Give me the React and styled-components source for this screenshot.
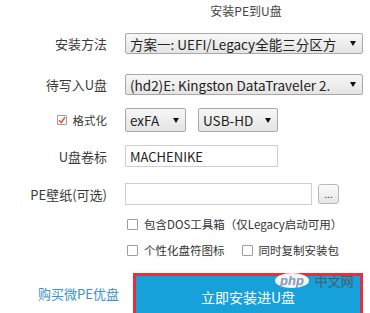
import React from "react";
import styled, { createGlobalStyle } from "styled-components";

const Global = createGlobalStyle`
  html, body { margin: 0; padding: 0; background: #fff; overflow: hidden; }
  body { font-family: "Noto Sans CJK SC", "Noto Sans", sans-serif; color: #333; }
`;

const Page = styled.div`
  width: 370px;
  height: 313px;
  overflow: hidden;
  position: relative;
  background: #fff;
`;

const Title = styled.div`
  height: 22px;
  line-height: 22px;
  padding-left: 122px;
  text-align: center;
  font-size: 12px;
  color: #444;
`;

const Row = styled.div`
  display: flex;
  align-items: center;
  height: ${(p) => p.$h}px;
  margin-top: ${(p) => p.$mt}px;
`;

const Label = styled.div`
  width: 107px;
  padding-right: 18px;
  display: flex;
  justify-content: flex-end;
  align-items: center;
  gap: 6px;
  font-size: ${(p) => p.$fs || 13}px;
  color: #3a3a3a;
  white-space: nowrap;
  flex-shrink: 0;
`;

const Select = styled.div`
  box-sizing: border-box;
  width: ${(p) => p.$w}px;
  height: ${(p) => p.$h}px;
  margin-right: ${(p) => p.$mr || 0}px;
  border: 1px solid #a8a8a8;
  border-radius: 2px;
  background: linear-gradient(#f7f7f7, #e4e4e4);
  display: flex;
  align-items: center;
  padding: 0 6px 0 4px;
  font-size: 13.5px;
  color: #222;
  white-space: nowrap;
  overflow: hidden;
`;

const SelectText = styled.span`
  flex: 1;
  overflow: hidden;
`;

const Arrow = styled.span`
  width: 0;
  height: 0;
  border-left: 3.5px solid transparent;
  border-right: 3.5px solid transparent;
  border-top: 5px solid #111;
  margin-left: 4px;
  flex-shrink: 0;
`;

const TextInput = styled.div`
  box-sizing: border-box;
  width: ${(p) => p.$w}px;
  height: 22px;
  border: 1px solid #cfcfcf;
  background: #fff;
  display: flex;
  align-items: center;
  padding-left: 4px;
  font-size: 13px;
  color: #222;
  margin-right: ${(p) => p.$mr || 0}px;
`;

const DotsButton = styled.div`
  box-sizing: border-box;
  width: 21px;
  height: 20px;
  border: 1px solid #b8b8b8;
  border-radius: 3px;
  background: linear-gradient(#fbfbfb, #e6e6e6);
  font-size: 10px;
  line-height: 1;
  display: flex;
  align-items: flex-end;
  justify-content: center;
  padding-bottom: 4px;
  color: #333;
`;

const Box = styled.span`
  box-sizing: border-box;
  width: ${(p) => p.$s || 11}px;
  height: ${(p) => p.$s || 11}px;
  border: 1px solid #9c9c9c;
  background: #fff;
  border-radius: 1px;
  flex-shrink: 0;
  display: inline-flex;
  align-items: center;
  justify-content: center;
`;

const Check = styled.label`
  display: flex;
  align-items: center;
  gap: 6px;
  margin-left: ${(p) => p.$ml || 0}px;
  font-size: 11.5px;
  color: #333;
  white-space: nowrap;
`;

const Footer = styled.div`
  display: flex;
  margin-top: 16px;
`;

const LinkCell = styled.div`
  width: 133px;
  box-sizing: border-box;
  padding-right: 14px;
  padding-bottom: 8px;
  display: flex;
  justify-content: flex-end;
  align-items: center;
`;

const BuyLink = styled.a`
  font-size: 13px;
  color: #3b8fd3;
  text-decoration: none;
  white-space: nowrap;
`;

const InstallButton = styled.button`
  position: relative;
  box-sizing: border-box;
  width: 230px;
  height: 48px;
  border: 3px solid #e0323c;
  background: #17a1da;
  color: #fff;
  font-family: "Noto Sans CJK SC", sans-serif;
  font-size: 14px;
  padding: 0;
  cursor: pointer;
`;

const Watermark = styled.div`
  position: absolute;
  left: 275px;
  top: 273px;
  display: flex;
  align-items: center;
  gap: 6px;
  pointer-events: none;
`;

const PhpBadge = styled.span`
  background: rgba(255, 255, 255, 0.92);
  border-radius: 50%;
  padding: 0 5px;
  font-family: "Liberation Sans", sans-serif;
  font-weight: bold;
  font-style: italic;
  font-size: 13px;
  line-height: 15px;
  color: #8c96b4;
`;

const WmText = styled.span`
  font-size: 13px;
  color: #4c5a66;
  line-height: 15px;
`;

export default function App() {
  return (
    <>
      <Global />
      <Page>
        <Title>安装PE到U盘</Title>
        <Row $h={21} $mt={11}>
          <Label>安装方法</Label>
          <Select $w={238} $h={21}>
            <SelectText>方案一: UEFI/Legacy全能三分区方</SelectText>
            <Arrow />
          </Select>
        </Row>
        <Row $h={21} $mt={20}>
          <Label>待写入U盘</Label>
          <Select $w={238} $h={21}>
            <SelectText>(hd2)E: Kingston DataTraveler 2.</SelectText>
            <Arrow />
          </Select>
        </Row>
        <Row $h={24} $mt={13}>
          <Label $fs={11.5}>
            <Box $s={10}>
              <svg width="8" height="8" viewBox="0 0 8 8">
                <path d="M1 4.2 L3.2 6.5 L7 1.2" fill="none" stroke="#e2572b" strokeWidth="1.5" />
              </svg>
            </Box>
            格式化
          </Label>
          <Select $w={61} $h={24} $mr={12}>
            <SelectText>exFA</SelectText>
            <Arrow />
          </Select>
          <Select $w={80} $h={24}>
            <SelectText>USB-HD</SelectText>
            <Arrow />
          </Select>
        </Row>
        <Row $h={22} $mt={13}>
          <Label>U盘卷标</Label>
          <TextInput $w={153}>MACHENIKE</TextInput>
        </Row>
        <Row $h={22} $mt={16}>
          <Label>PE壁纸(可选)</Label>
          <TextInput $w={187} $mr={6} />
          <DotsButton>...</DotsButton>
        </Row>
        <Row $h={14} $mt={12}>
          <Check $ml={127}>
            <Box />
            包含DOS工具箱（仅Legacy启动可用）
          </Check>
        </Row>
        <Row $h={14} $mt={12}>
          <Check $ml={127}>
            <Box />
            个性化盘符图标
          </Check>
          <Check $ml={17}>
            <Box />
            同时复制安装包
          </Check>
        </Row>
        <Footer>
          <LinkCell>
            <BuyLink href="#">购买微PE优盘</BuyLink>
          </LinkCell>
          <InstallButton>立即安装进U盘</InstallButton>
        </Footer>
        <Watermark>
          <PhpBadge>php</PhpBadge>
          <WmText>中文网</WmText>
        </Watermark>
      </Page>
    </>
  );
}
